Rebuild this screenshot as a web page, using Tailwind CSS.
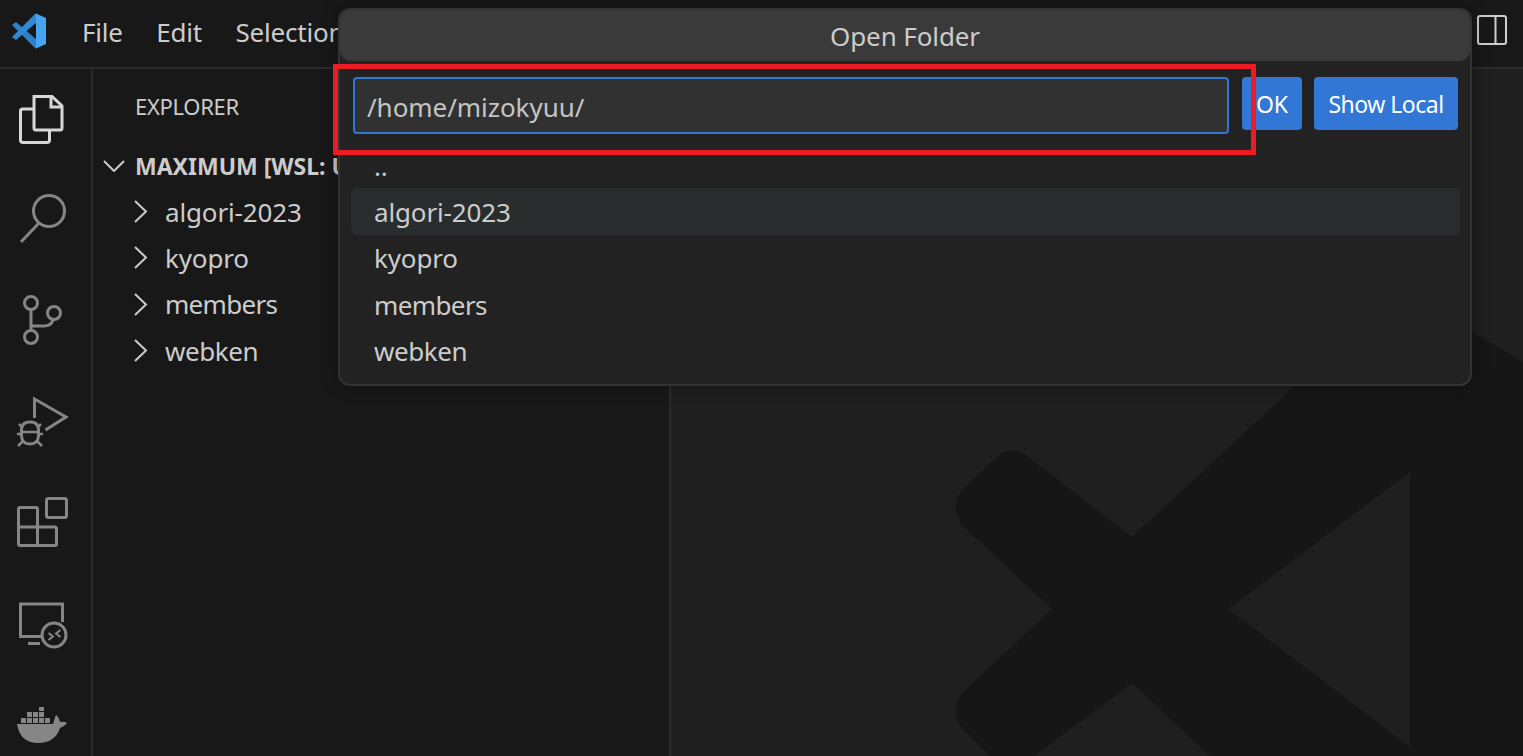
<!DOCTYPE html>
<html lang="en">
<head>
  <meta charset="UTF-8">
  <title>Open Folder</title>
  <script src="https://cdn.jsdelivr.net/npm/@tailwindcss/browser@4"></script>
</head>
<body class="bg-[#1f1f1f] overflow-hidden font-['Noto_Sans',sans-serif]">
<div class="relative w-[1523px] h-[756px] overflow-hidden flex flex-col">

  <!-- title bar -->
  <header class="h-[69px] shrink-0 bg-[#181818] border-b-2 border-[#2b2b2b] flex items-start">
    <svg class="ml-[11px] mt-[13px] w-[36px] h-[36px]" viewBox="0 0 36 36">
      <path d="M1 12 L5 9 L26 27 L26 35 L24.500 35.500 Z" fill="#2f80c8"/>
      <path d="M1 24 L5 27 L26 9 L26 1 L24.500 .5 Z" fill="#3388d4"/>
      <path d="M25 .5 L35 5 L35 31 L25 35.500 Z" fill="#45a5f0"/>
    </svg>
    <nav class="ml-[35px] mt-[14px] flex gap-[33.500px] text-[26px] leading-[36px] text-[#cccccc] tracking-[-0.2px]">
      <span>File</span><span>Edit</span><span>Selection</span>
    </nav>
    <svg class="absolute left-[1476px] top-[14px] w-[32px] h-[32px]" viewBox="0 0 32 32" fill="none" stroke="#cccccc" stroke-width="2">
      <rect x="2" y="2" width="28" height="28" rx="2"/>
      <path d="M19.500 2 V30"/>
    </svg>
  </header>

  <div class="flex flex-1 min-h-0">
    <!-- activity bar -->
    <aside class="w-[93px] shrink-0 bg-[#181818] border-r-2 border-[#2b2b2b] relative">
      <svg class="absolute left-0 top-0 w-[91px] h-[687px]" viewBox="0 69 91 687" fill="none" stroke="#868686" stroke-width="3">
        <g stroke="#d7d7d7">
          <path d="M34 96.500 H52 L62 106 V128 Q62 130 60 130 H36 Q34 130 34 128 Z"/>
          <path d="M51 97 V107 H62"/>
          <path d="M34 109 H23 Q20.500 109 20.500 111 V140 Q20.500 142.500 23 142.500 H47 Q49.500 142.500 49.500 140 V130"/>
        </g>
        <circle cx="49" cy="211" r="15.500"/>
        <path d="M39 223 L21 242"/>
        <circle cx="31" cy="303" r="6.500"/>
        <circle cx="54" cy="313" r="6.500"/>
        <circle cx="31" cy="337" r="6.500"/>
        <path d="M31 310 V330 M31 326 H44 Q51 326 53 320"/>
        <path d="M34.500 418 V399 L66 417 L45.500 430"/>
        <path d="M21.500 429 Q22 422 30 422 Q38 422 38.500 429 V436 Q38 444 30 444 Q22 444 21.500 436 Z"/>
        <path d="M19 424 L23 428 M41 424 L37 428 M17 434 H22 M43 434 H38 M18 446 L23 441 M42 446 L37 441 M21 432 H39" stroke-width="2.500"/>
        <path d="M18.500 527.500 V509 Q18.500 507.500 20 507.500 H36 Q37.500 507.500 37.500 509 V545"/>
        <path d="M18.500 527 H55 Q56.500 527 56.500 529 V544 Q56.500 545.500 55 545.500 H20 Q18.500 545.500 18.500 544 V527"/>
        <rect x="46.500" y="498.500" width="20" height="19" rx="2"/>
        <path d="M41 636.500 H20.500 V604 H62.500 V622"/>
        <path d="M28 643.500 H40"/>
        <circle cx="54" cy="635" r="12"/>
        <path d="M48.500 633 L53 636.500 L48.500 640 M60.500 630 L56 633.500 L60.500 637" stroke-width="2"/>
        <g fill="#868686" stroke="none">
          <path d="M17 724 H53 Q55 717 56 715 Q59 717 60 722 Q64 721 67 723 Q64 727 60 728 Q55 743 38 743 Q20 743 17 724 Z"/>
          <path d="M21 718 H26 V723 H21 Z M27 718 H32 V723 H27 Z M33 718 H38 V723 H33 Z M39 718 H44 V723 H39 Z M45 718 H50 V723 H45 Z M27 712 H32 V717 H27 Z M33 712 H38 V717 H33 Z M39 712 H44 V717 H39 Z M39 707 H44 V711 H39 Z"/>
        </g>
      </svg>
    </aside>

    <!-- sidebar -->
    <aside class="w-[578px] shrink-0 bg-[#181818] border-r-2 border-[#2b2b2b] text-[#cccccc]">
      <div class="h-[74px] pl-[42px] pt-[22px] text-[22px] leading-[30px] tracking-[-0.3px]">EXPLORER</div>
      <div class="h-[46px] flex items-center font-bold text-[23px] text-[#cccccc]">
        <svg class="ml-[10px] mr-[10px] w-[22px] h-[12px]" viewBox="0 0 22 12" fill="none" stroke="#cccccc" stroke-width="2"><path d="M1 1 L11 11 L21 1"/></svg>
        <span class="whitespace-nowrap">MAXIMUM [WSL: U</span>
      </div>
      <ul class="text-[26px] tracking-[-0.15px]">
        <li class="h-[46.300px] flex items-center pl-[40px]"><svg class="w-[15px] h-[24px] mr-[17px]" viewBox="0 0 15 24" fill="none" stroke="#cccccc" stroke-width="2"><path d="M2 1 L13 11.500 L2 22"/></svg>algori-2023</li>
        <li class="h-[46.300px] flex items-center pl-[40px]"><svg class="w-[15px] h-[24px] mr-[17px]" viewBox="0 0 15 24" fill="none" stroke="#cccccc" stroke-width="2"><path d="M2 1 L13 11.500 L2 22"/></svg>kyopro</li>
        <li class="h-[46.300px] flex items-center pl-[40px] tracking-[-0.7px]"><svg class="w-[15px] h-[24px] mr-[17px]" viewBox="0 0 15 24" fill="none" stroke="#cccccc" stroke-width="2"><path d="M2 1 L13 11.500 L2 22"/></svg>members</li>
        <li class="h-[46.300px] flex items-center pl-[40px] tracking-[-0.45px]"><svg class="w-[15px] h-[24px] mr-[17px]" viewBox="0 0 15 24" fill="none" stroke="#cccccc" stroke-width="2"><path d="M2 1 L13 11.500 L2 22"/></svg>webken</li>
      </ul>
    </aside>

    <!-- editor watermark -->
    <main class="flex-1 relative">
      <svg class="absolute right-0 bottom-0 w-[852px] h-[687px]" viewBox="671 69 852 687">
        <path fill="#161616" fill-rule="evenodd" d="M1132 537 L1296 385 L1400 290 L1523 362 V756 H1210 L1132 683 L1034 756 H990 L962 728 Q949 710 962 693 L1052 609 L962 525 Q949 507 962 490 L996 458 Q1012 444 1028 457 Z M1228 609 L1410 472 V747 Z"/>
      </svg>
    </main>
  </div>

  <!-- quick input -->
  <section class="absolute left-[338px] top-[8px] w-[1134px] h-[378px] bg-[#222222] border-2 border-[#333333] rounded-[12px] shadow-[0_0_16px_rgba(0,0,0,0.36)] text-[#cccccc]">
    <div class="h-[51px] bg-[#3a3a3a] rounded-[11px] flex items-center justify-center pt-[1px] text-[26px] tracking-[-0.1px]">Open Folder</div>
    <div class="mt-[16px] ml-[13px] mr-[12px] flex gap-[13px] items-start">
      <div class="w-[876px] h-[57px] bg-[#313131] border-2 border-[#3277d6] rounded-[4px] pl-[12px] pt-[3px] flex items-center text-[26px] tracking-[-0.05px] text-[#c4c4c4]">/home/mizokyuu/</div>
      <button class="w-[60px] h-[53px] pt-[2px] bg-[#3277d6] rounded-[4px] text-[#ffffff] text-[23px]">OK</button>
      <button class="ml-[-1px] w-[144px] h-[53px] pt-[2px] bg-[#3277d6] rounded-[4px] text-[#ffffff] text-[23px] tracking-[-0.5px]">Show Local</button>
    </div>
    <ul class="mt-[8px] ml-[11px] mr-[10px] text-[26px] tracking-[-0.15px]">
      <li class="h-[46.300px] pt-[2px] flex items-center pl-[23px]">..</li>
      <li class="h-[46.300px] pt-[2px] flex items-center pl-[23px] bg-[#2a2d2e] rounded-[6px]">algori-2023</li>
      <li class="h-[46.300px] pt-[2px] flex items-center pl-[23px]">kyopro</li>
      <li class="h-[46.300px] pt-[2px] flex items-center pl-[23px] tracking-[-0.6px]">members</li>
      <li class="h-[46.300px] pt-[2px] flex items-center pl-[23px] tracking-[-0.45px]">webken</li>
    </ul>
  </section>

  <!-- red annotation -->
  <div class="absolute left-[333px] top-[64px] w-[923px] h-[91px] border-[5px] border-[#ed1c24]"></div>
</div>
</body>
</html>
